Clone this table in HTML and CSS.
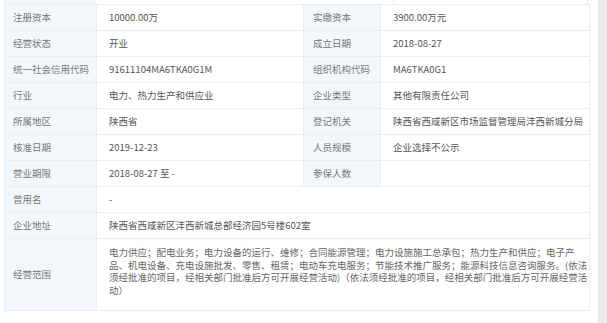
FILE: index.html
```html
<!DOCTYPE html>
<html lang="zh-CN">
<head>
<meta charset="utf-8">
<title>工商信息</title>
<link rel="stylesheet" href="styles.css">
</head>
<body>
<div class="page">
  <div class="main">
    <div class="strip">
      <div class="strip-label"></div>
      <div class="strip-a"></div>
      <div class="strip-b"></div>
    </div>
    <table class="info">
      <colgroup>
        <col class="c-l1"><col class="c-v1"><col class="c-l2"><col class="c-v2">
      </colgroup>
      <tr><td class="lb">注册资本</td><td class="vl">10000.00万</td><td class="lb lb2">实缴资本</td><td class="vl">3900.00万元</td></tr>
      <tr><td class="lb">经营状态</td><td class="vl">开业</td><td class="lb lb2">成立日期</td><td class="vl">2018-08-27</td></tr>
      <tr><td class="lb">统一社会信用代码</td><td class="vl">91611104MA6TKA0G1M</td><td class="lb lb2">组织机构代码</td><td class="vl">MA6TKA0G1</td></tr>
      <tr><td class="lb">行业</td><td class="vl">电力、热力生产和供应业</td><td class="lb lb2">企业类型</td><td class="vl">其他有限责任公司</td></tr>
      <tr><td class="lb">所属地区</td><td class="vl">陕西省</td><td class="lb lb2">登记机关</td><td class="vl">陕西省西咸新区市场监督管理局沣西新城分局</td></tr>
      <tr><td class="lb">核准日期</td><td class="vl">2019-12-23</td><td class="lb lb2">人员规模</td><td class="vl">企业选择不公示</td></tr>
      <tr><td class="lb">营业期限</td><td class="vl">2018-08-27 至 -</td><td class="lb lb2">参保人数</td><td class="vl"></td></tr>
      <tr><td class="lb">曾用名</td><td class="vl" colspan="3">-</td></tr>
      <tr><td class="lb">企业地址</td><td class="vl" colspan="3">陕西省西咸新区沣西新城总部经济园5号楼602室</td></tr>
      <tr class="scope-row"><td class="lb">经营范围</td><td class="vl scope" colspan="3"><div class="scope-text">电力供应；配电业务；电力设备的运行、维修；合同能源管理；电力设施施工总承包；热力生产和供应；电子产<br>品、机电设备、充电设施批发、零售、租赁；电动车充电服务；节能技术推广服务；能源科技信息咨询服务。(依法<br>须经批准的项目，经相关部门批准后方可开展经营活动)（依法须经批准的项目，经相关部门批准后方可开展经营活<br>动）</div></td></tr>
    </table>
  </div>
  <div class="scrollbar"></div>
</div>
</body>
</html>
```

FILE: styles.css
```css
html, body {
  margin: 0;
  padding: 0;
  background: #fff;
}
body {
  font-family: "Noto Sans CJK SC", "Noto Sans", sans-serif;
  font-size: 9.5px;
  color: #555;
}
.page {
  display: flex;
  width: 607px;
  height: 323px;
  overflow: hidden;
}
.main {
  flex: 0 0 598px;
  padding-left: 4px;
  box-sizing: border-box;
}
.scrollbar {
  flex: 0 0 9px;
  background: #e9ecef;
}
.strip {
  display: flex;
  width: 584px;
  height: 4px;
}
.strip-label {
  width: 92px;
  background: #f2f7fc;
  border-left: 1px solid #e6eef6;
  box-sizing: border-box;
}
.strip-a {
  width: 297px;
  border-right: 1px solid #e6eef6;
}
.strip-b {
  flex: 1;
  border-right: 1px solid #e6eef6;
}
.info {
  width: 585px;
  border-collapse: collapse;
  table-layout: fixed;
}
.c-l1 { width: 92px; }
.c-v1 { width: 207px; }
.c-l2 { width: 77px; }
.c-v2 { width: 209px; }
.info tr {
  height: 26px;
}
.info td {
  border: 1px solid #e6eef6;
  padding: 0;
  vertical-align: middle;
  line-height: 13px;
  white-space: nowrap;
}
.lb {
  background: #f2f7fc;
  color: #777;
  padding-left: 8px !important;
}
.lb2 {
  padding-left: 9px !important;
}
.vl {
  color: #555;
  padding-left: 12px !important;
}
.info td.scope {
  vertical-align: top;
}
.scope-text {
  box-sizing: border-box;
  height: 71px;
  color: #666;
  line-height: 12.6px;
  padding-top: 7px;
}
```
